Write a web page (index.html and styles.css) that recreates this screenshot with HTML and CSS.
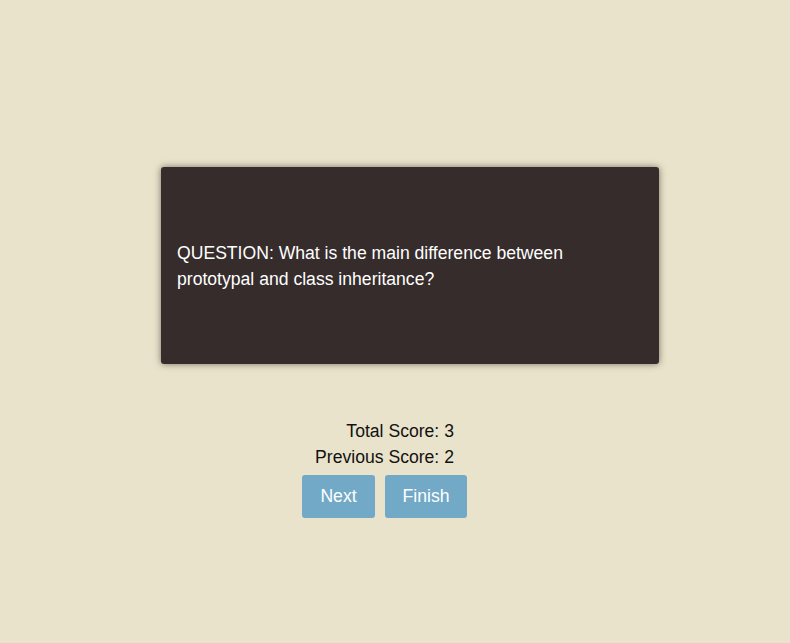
FILE: index.html
```html
<!DOCTYPE html>
<html>
<head>
<meta charset="utf-8">
<link rel="stylesheet" href="styles.css">
</head>
<body>
<main class="page">
  <section class="card">
    <p class="question">QUESTION: What is the main difference between prototypal and class inheritance?</p>
  </section>
  <section class="controls">
    <div class="scores">
      <div>Total Score: 3</div>
      <div>Previous Score: 2</div>
    </div>
    <div class="buttons">
      <button class="btn btn-next">Next</button>
      <button class="btn btn-finish">Finish</button>
    </div>
  </section>
</main>
</body>
</html>
```
FILE: styles.css
```css
html, body {
  margin: 0;
  padding: 0;
  background: #e9e3cb;
  font-family: "Liberation Sans", Arial, sans-serif;
}
.page {
  height: 643px;
  padding-top: 167px;
  box-sizing: border-box;
}
.card {
  width: 498px;
  height: 197px;
  box-sizing: border-box;
  margin-left: calc(50% - 234px);
  background: #362c2b;
  border-radius: 3px;
  box-shadow: 0 0 7px rgba(0, 0, 0, 0.5);
  padding: 1px 16px 0;
  display: flex;
  align-items: center;
}
.question {
  margin: 0;
  color: #ffffff;
  font-size: 17.6px;
  line-height: 26px;
  max-width: 410px;
}
.controls {
  margin-top: 54px;
  padding-right: 21px;
  display: flex;
  flex-direction: column;
  align-items: center;
}
.scores {
  text-align: right;
  font-size: 17.6px;
  line-height: 26px;
  color: #111;
}
.buttons {
  margin-top: 5px;
  display: flex;
  gap: 10px;
}
.btn {
  font-family: "Liberation Sans", Arial, sans-serif;
  font-size: 17.6px;
  line-height: 19px;
  color: #fff;
  background: #72a9c6;
  border: none;
  border-radius: 3px;
  height: 43px;
  padding: 0;
}
.btn-next { width: 73px; }
.btn-finish { width: 82px; }
```
